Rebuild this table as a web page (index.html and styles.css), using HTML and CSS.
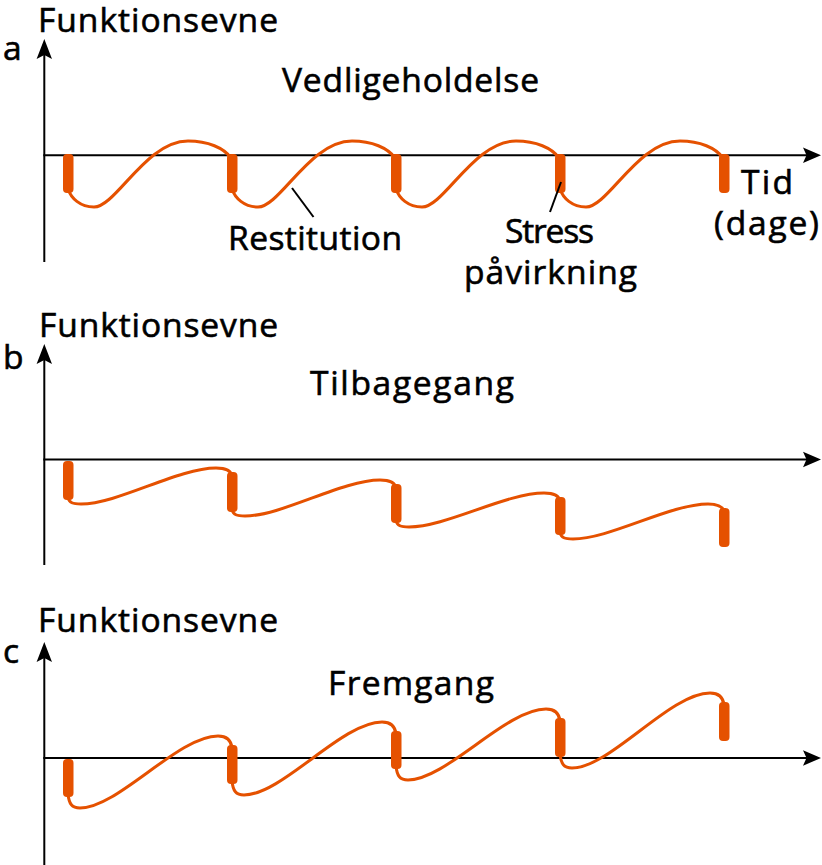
FILE: index.html
```html
<!DOCTYPE html>
<html lang="da">
<head>
<meta charset="utf-8">
<title>Funktionsevne – Vedligeholdelse, Tilbagegang, Fremgang</title>
<link rel="stylesheet" href="styles.css">
</head>
<body>
<main class="figure">
  <section class="panel panel-a">
    <svg class="chart" viewBox="0 0 822 305" width="822" height="305">
      <text class="label" x="38" y="32" textLength="240" lengthAdjust="spacing">Funktionsevne</text>
      <text class="label" x="3" y="60">a</text>
      <line class="axis" x1="44.3" y1="52" x2="44.3" y2="262"/>
      <path class="arrow" d="M44.3,39 L52,59 L44.3,55 L36.6,59 Z"/>
      <line class="axis" x1="43.3" y1="155.3" x2="808" y2="155.3"/>
      <path class="arrow" d="M821,155.3 L803,147.6 L806.5,155.3 L803,163 Z"/>
      <path class="wave" d="M68,189 C71,198 80,207 94,207 C116,207 146,141 188,141 C208,141 224,148 231,158
        M232,189 C235,198 244,207 258,207 C280,207 310,141 352,141 C372,141 388,148 395,158
        M396,189 C399,198 408,207 422,207 C444,207 474,141 516,141 C536,141 552,148 559,158
        M560,189 C563,198 572,207 586,207 C608,207 638,141 680,141 C700,141 716,148 723,158"/>
      <rect class="bar" x="63" y="154" width="10.5" height="39" rx="4"/>
      <rect class="bar" x="227" y="154" width="10.5" height="39" rx="4"/>
      <rect class="bar" x="391" y="154" width="10.5" height="39" rx="4"/>
      <rect class="bar" x="555" y="154" width="10.5" height="39" rx="4"/>
      <rect class="bar" x="719" y="154" width="10.5" height="39" rx="4"/>
      <line class="leader" x1="292" y1="188" x2="313.5" y2="217"/>
      <line class="leader" x1="550" y1="212" x2="561" y2="182"/>
      <text class="label" x="282" y="92" textLength="257" lengthAdjust="spacing">Vedligeholdelse</text>
      <text class="label" x="228" y="250" textLength="174" lengthAdjust="spacing">Restitution</text>
      <text class="label"><tspan x="505" y="243" textLength="89" lengthAdjust="spacing">Stress</tspan><tspan x="464" y="284" textLength="173" lengthAdjust="spacing">påvirkning</tspan></text>
      <text class="label"><tspan x="741" y="194" textLength="52" lengthAdjust="spacing">Tid</tspan><tspan x="714" y="235" textLength="105" lengthAdjust="spacing">(dage)</tspan></text>
    </svg>
  </section>

  <section class="panel panel-b">
    <svg class="chart" viewBox="0 0 822 298" width="822" height="298">
      <text class="label" x="39" y="32" textLength="239" lengthAdjust="spacing">Funktionsevne</text>
      <text class="label" x="3" y="64">b</text>
      <line class="axis" x1="44.3" y1="52" x2="44.3" y2="260"/>
      <path class="arrow" d="M44.3,39 L52,59 L44.3,55 L36.6,59 Z"/>
      <line class="axis" x1="43.3" y1="154.5" x2="808" y2="154.5"/>
      <path class="arrow" d="M821,154.5 L803,146.8 L806.5,154.5 L803,162.2 Z"/>
      <path class="wave" d="M68,192 C69,198 73,199 81,199 C118,199 178,163 216,163 C225,163 231,165 232,171
        M232,204 C233,210 237,211 245,211 C282,211 342,175 380,175 C389,175 395,177 396,183
        M396,215 C397,221 401,222 409,222 C446,222 506,188 544,188 C553,188 559,190 560,196
        M560,227 C561,233 565,234 573,234 C610,234 670,199 708,199 C717,199 723,201 724,207"/>
      <rect class="bar" x="63" y="156" width="10.5" height="39" rx="4"/>
      <rect class="bar" x="227" y="167" width="10.5" height="40" rx="4"/>
      <rect class="bar" x="391" y="179" width="10.5" height="39" rx="4"/>
      <rect class="bar" x="555" y="192" width="10.5" height="38" rx="4"/>
      <rect class="bar" x="719" y="203" width="10.5" height="39" rx="4"/>
      <text class="label" x="310" y="90" textLength="204" lengthAdjust="spacing">Tilbagegang</text>
    </svg>
  </section>

  <section class="panel panel-c">
    <svg class="chart" viewBox="0 0 822 262" width="822" height="262">
      <text class="label" x="38" y="29" textLength="240" lengthAdjust="spacing">Funktionsevne</text>
      <text class="label" x="3" y="60">c</text>
      <line class="axis" x1="44.3" y1="52" x2="44.3" y2="262"/>
      <path class="arrow" d="M44.3,39 L52,59 L44.3,55 L36.6,59 Z"/>
      <line class="axis" x1="43.3" y1="155" x2="808" y2="155"/>
      <path class="arrow" d="M821,155 L803,147.3 L806.5,155 L803,162.7 Z"/>
      <path class="wave" d="M68,191 C69,201 72,205 80,205 C118,205 178,133 218,133 C226,133 231,136 232,145
        M232,178 C233,188 236,192 244,192 C282,192 342,119 382,119 C390,119 395,122 396,131
        M396,163 C397,173 400,177 408,177 C446,177 506,106 546,106 C554,106 559,109 560,118
        M560,151 C561,161 564,165 572,165 C610,165 670,90 710,90 C718,90 723,93 724,102"/>
      <rect class="bar" x="63" y="156" width="10.5" height="38" rx="4"/>
      <rect class="bar" x="227" y="142" width="10.5" height="39" rx="4"/>
      <rect class="bar" x="391" y="128" width="10.5" height="38" rx="4"/>
      <rect class="bar" x="555" y="115" width="10.5" height="39" rx="4"/>
      <rect class="bar" x="719" y="99" width="10.5" height="39" rx="4"/>
      <text class="label" x="328" y="92" textLength="166" lengthAdjust="spacing">Fremgang</text>
    </svg>
  </section>
</main>
</body>
</html>
```

FILE: styles.css
```css
html, body {
  margin: 0;
  padding: 0;
  background: #ffffff;
}

.figure {
  display: flex;
  flex-direction: column;
  width: 822px;
}

.panel {
  display: block;
  line-height: 0;
}

.chart {
  display: block;
  overflow: visible;
}

.label {
  font-family: "Open Sans", "Liberation Sans", sans-serif;
  font-size: 33.6px;
  fill: #000000;
  stroke: #000000;
  stroke-width: 0.6px;
  paint-order: stroke;
}

.axis {
  stroke: #000000;
  stroke-width: 2;
}

.arrow {
  fill: #000000;
}

.wave {
  fill: none;
  stroke: #e55100;
  stroke-width: 3;
  stroke-linecap: round;
}

.bar {
  fill: #e55100;
}

.leader {
  stroke: #000000;
  stroke-width: 2;
}
```
